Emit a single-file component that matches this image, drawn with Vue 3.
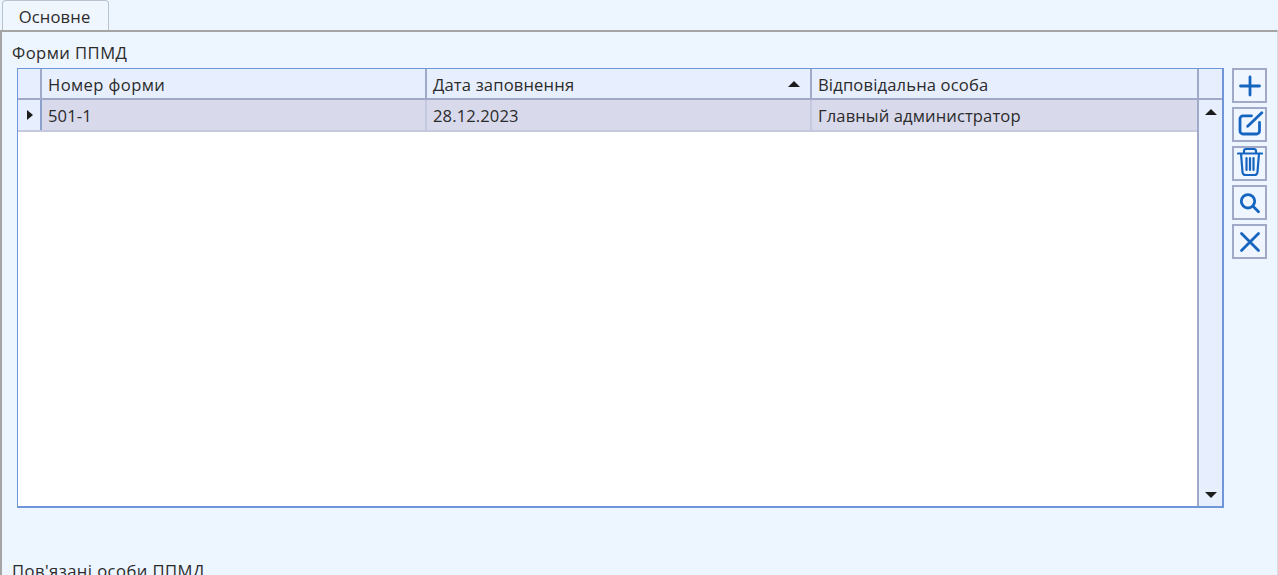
<script setup>
const columns = [
  { title: 'Номер форми', value: '501-1' },
  { title: 'Дата заповнення', value: '28.12.2023', sorted: true },
  { title: 'Відповідальна особа', value: 'Главный администратор' },
]
</script>

<template>
  <div class="app">
    <div class="tabs">
      <div class="tab">Основне</div>
    </div>
    <div class="panel">
      <div class="label">Форми ППМД</div>
      <div class="section">
        <div class="grid">
          <div class="head">
            <div class="corner"></div>
            <div v-for="c in columns" :key="c.title" class="hcell">
              <span>{{ c.title }}</span>
              <i v-if="c.sorted" class="tri up sort"></i>
            </div>
            <div class="hscroll"></div>
          </div>
          <div class="body">
            <div class="rows">
              <div class="row">
                <div class="rowhead"><i class="tri right"></i></div>
                <div v-for="c in columns" :key="c.title" class="cell">{{ c.value }}</div>
              </div>
            </div>
            <div class="scroll">
              <i class="tri up"></i>
              <i class="tri down"></i>
            </div>
          </div>
        </div>
        <div class="tools">
          <button class="tool" aria-label="Додати">
            <svg viewBox="0 0 24 24" width="24" height="24"><path d="M12 3v18M2.500 12h19" /></svg>
          </button>
          <button class="tool" aria-label="Редагувати">
            <svg viewBox="0 0 28 28" width="28" height="28"><path d="M15.500 4.800H7A3 3 0 0 0 4 7.800V20A3 3 0 0 0 7 23H20.500A3 3 0 0 0 23.500 20V11.500M11.700 15.200 25.800 1.800" /></svg>
          </button>
          <button class="tool" aria-label="Видалити">
            <svg class="trash" viewBox="0 0 26 30" width="26" height="30"><path d="M1 6.500H25M7 6.500V4A2 2 0 0 1 9 2H17A2 2 0 0 1 19 4V6.500M4 6.500 5.500 25A3 3 0 0 0 8.500 28H17.500A3 3 0 0 0 20.500 25L22 6.500M9.500 11V23M13 11V23M16.500 11V23" /></svg>
          </button>
          <button class="tool" aria-label="Пошук">
            <svg viewBox="0 0 24 24" width="24" height="24"><circle cx="10" cy="10.300" r="6.700" /><path d="M15 15.300l5.500 5.500" /></svg>
          </button>
          <button class="tool" aria-label="Закрити">
            <svg viewBox="0 0 24 24" width="24" height="24"><path d="M3.500 3.500l17 17M20.500 3.500l-17 17" /></svg>
          </button>
        </div>
      </div>
      <div class="label second">Пов'язані особи ППМД</div>
    </div>
  </div>
</template>

<style>
html, body { margin: 0; overflow: hidden; background: #edf5ff; }
</style>

<style scoped>
.app {
  width: 1278px;
  height: 575px;
  overflow: hidden;
  display: flex;
  flex-direction: column;
  background: #edf5ff;
  color: #2b2b2b;
  font-family: "Open Sans", "Noto Sans", sans-serif;
  font-size: 16.600px;
}
.tabs {
  height: 30px;
  padding-left: 2px;
  display: flex;
  flex: none;
}
.tab {
  width: 103px;
  height: 30px;
  padding-right: 2px;
  border: 1px solid #b9c2cf;
  border-bottom: 0;
  border-radius: 4px 4px 0 0;
  text-align: center;
  line-height: 31px;
  letter-spacing: 0.15px;
  background: #f0f6fe;
}
.panel {
  flex: 1;
  min-height: 0;
  border-top: 2px solid #a5a5a5;
  border-left: 2px solid #a5a5a5;
  border-right: 1px solid #d5dbe3;
  padding: 10px 10px 0 10px;
}
.label { height: 26px; line-height: 22px; white-space: nowrap; letter-spacing: 0.45px; }
.second { margin-top: 52px; }
.section { display: flex; align-items: flex-start; padding-left: 5px; }
.grid {
  width: 1207px;
  height: 440px;
  flex: none;
  box-sizing: border-box;
  border: 1px solid #6f96d8;
  border-bottom-width: 2px;
  border-right-width: 2px;
  background: #fff;
  display: flex;
  flex-direction: column;
}
.head {
  display: grid;
  grid-template-columns: 24px 385px 385px 387px 1fr;
  height: 31px;
  flex: none;
  box-sizing: border-box;
  border-bottom: 2px solid #a0aac8;
  background: #e7eefe;
}
.corner, .hcell { border-right: 2px solid #a0aac8; box-sizing: border-box; }
.hcell {
  display: flex;
  align-items: center;
  justify-content: space-between;
  padding: 1px 10px 0 6px;
  letter-spacing: 0.15px;
}
.hcell:nth-child(2) { letter-spacing: 0.4px; }
.body { flex: 1; display: flex; min-height: 0; }
.rows { flex: 1; min-width: 0; }
.row {
  display: grid;
  grid-template-columns: 24px 385px 385px 1fr;
  height: 32px;
  box-sizing: border-box;
  border-bottom: 2px solid #c4c9de;
  background: #d8daeb;
}
.rowhead {
  background: #e7eefe;
  border-right: 2px solid #8ba1cc;
  display: flex;
  align-items: center;
  justify-content: center;
  box-sizing: border-box;
}
.cell {
  display: flex;
  align-items: center;
  padding: 1px 0 0 6px;
  border-right: 2px solid #c4c9de;
  box-sizing: border-box;
  letter-spacing: 0.1px;
}
.cell:first-of-type { letter-spacing: 0.4px; }
.cell:last-child { border-right: 0; }
.scroll {
  width: 25px;
  flex: none;
  box-sizing: border-box;
  background: #e7eefe;
  border-left: 2px solid #a0aac8;
  display: flex;
  flex-direction: column;
  align-items: center;
  justify-content: space-between;
  padding: 9px 0 8px;
}
.tri { display: block; width: 0; height: 0; border-style: solid; border-color: transparent; }
.tri.up { border-width: 0 6px 6px 6px; border-bottom-color: #1c1c1c; }
.tri.down { border-width: 6px 6px 0 6px; border-top-color: #1c1c1c; }
.tri.right { border-width: 5.500px 0 5.500px 6.500px; border-left-color: #1c1c1c; margin-left: 2px; }
.tools {
  margin-left: 8px;
  display: flex;
  flex-direction: column;
  gap: 4px;
}
.tool {
  width: 35px;
  height: 35px;
  padding: 0;
  box-sizing: border-box;
  border: 2px solid #a0aac8;
  background: #f0f6ff;
  display: flex;
  align-items: center;
  justify-content: center;
}
.tool svg { flex: none; fill: none; stroke: #1565c0; stroke-width: 2.800; stroke-linecap: round; }
.tool svg.trash { stroke-width: 2.200; margin-bottom: 4px; }
</style>
